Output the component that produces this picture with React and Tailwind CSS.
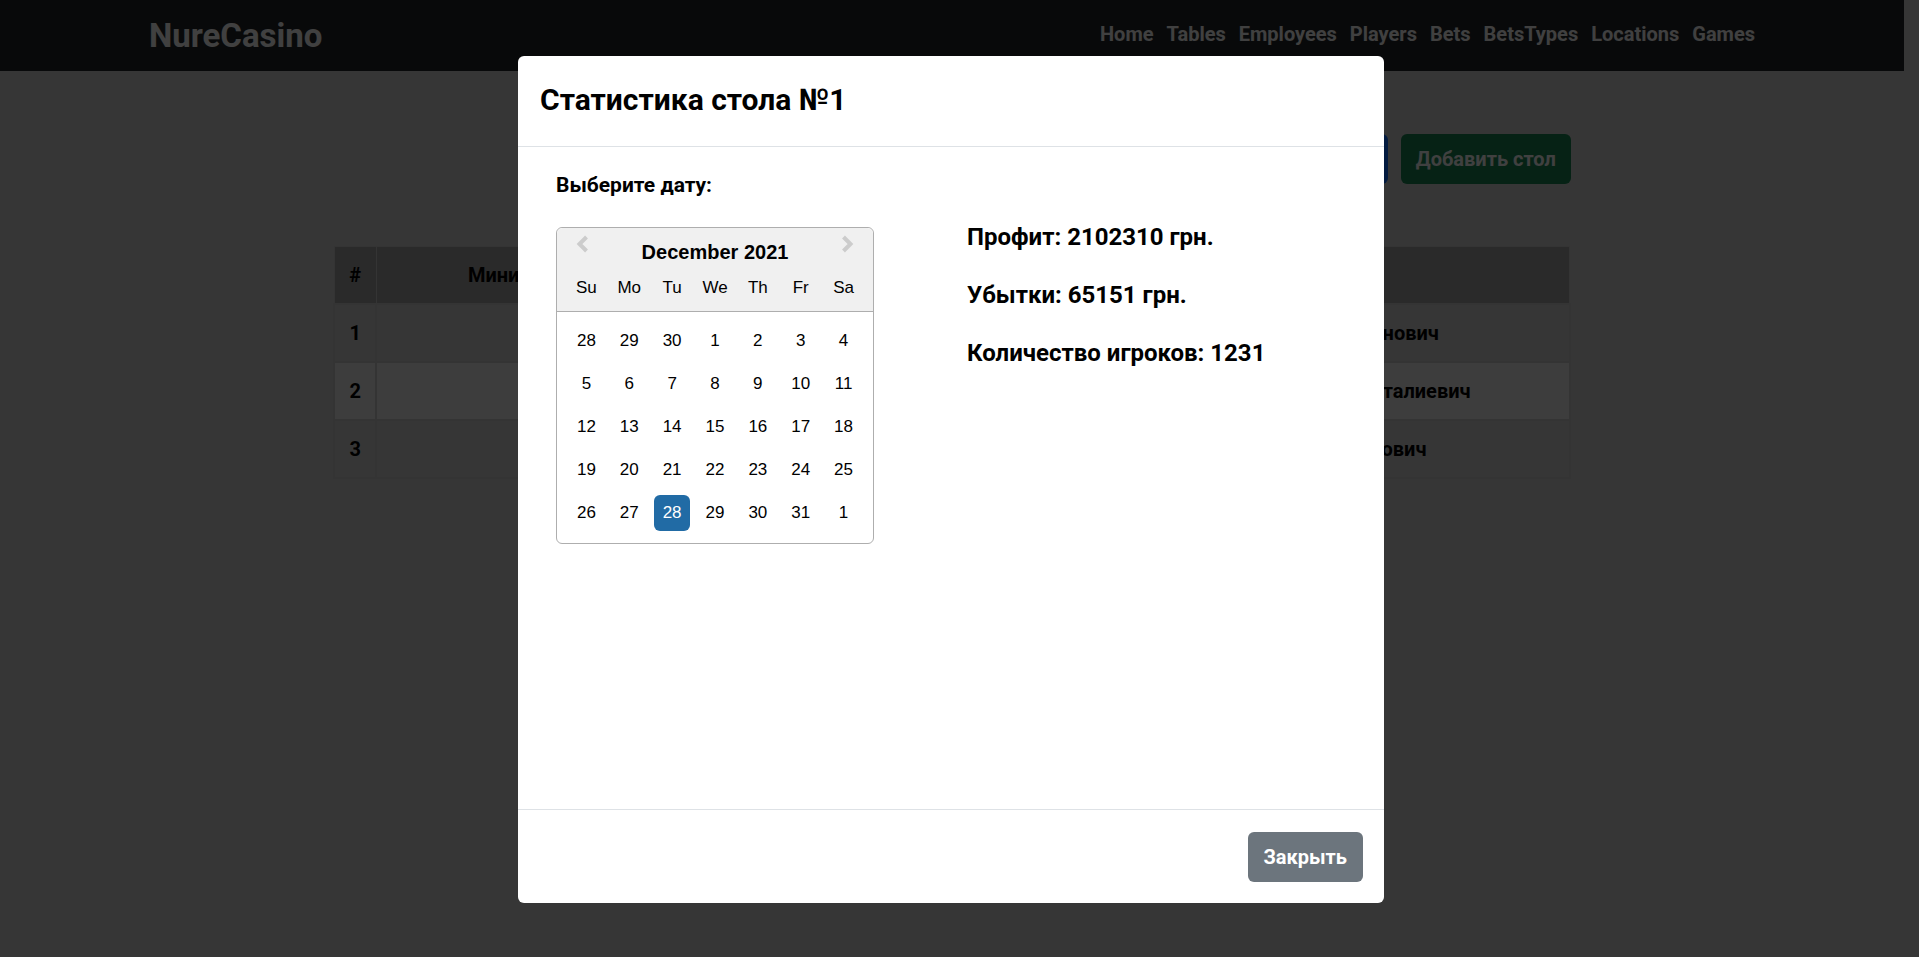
const links = ["Home", "Tables", "Employees", "Players", "Bets", "BetsTypes", "Locations", "Games"];

const rows = [
  { id: 1, min: 100, max: 1000, croupier: "Попов Лев Иванович" },
  { id: 2, min: 200, max: 5000, croupier: "Петров Андрей Виталиевич" },
  { id: 3, min: 500, max: 9000, croupier: "Ли Петр Петрович" },
];

const weekdays = ["Su", "Mo", "Tu", "We", "Th", "Fr", "Sa"];

const weeks = [
  [28, 29, 30, 1, 2, 3, 4],
  [5, 6, 7, 8, 9, 10, 11],
  [12, 13, 14, 15, 16, 17, 18],
  [19, 20, 21, 22, 23, 24, 25],
  [26, 27, 28, 29, 30, 31, 1],
];

function Navbar() {
  return (
    <header className="mr-[15px] flex h-[71px] items-center justify-between bg-[#212529] px-[149px] text-white">
      <a href="#home" className="text-[33px] leading-10">NureCasino</a>
      <nav className="flex gap-[13px] pb-1 text-xl">
        {links.map((name) => (
          <a key={name} href={"#" + name.toLowerCase()}>{name}</a>
        ))}
      </nav>
    </header>
  );
}

function TablesPage() {
  return (
    <main className="mr-[15px] flex flex-col items-center">
      <div className="w-[65%]">
        <div className="flex justify-end gap-[13px] pt-[63px] pb-[62px] text-xl text-white">
          <button className="h-[50px] rounded-md bg-[#0d6efd] px-[15px]">Обновить</button>
          <button className="h-[50px] rounded-md bg-[#198754] px-[15px]">Добавить стол</button>
        </div>
        <table className="w-full table-fixed border-collapse text-center text-xl">
          <thead>
            <tr className="h-[57px] bg-[#a6a6a6]">
              <th className="w-[42px] border border-[#d0d0d0]">#</th>
              <th className="w-[386px] border border-[#d0d0d0]">Минимальная ставка</th>
              <th className="w-[348px] border border-[#d0d0d0]">Максимальная ставка</th>
              <th className="border border-[#d0d0d0]">Крупье</th>
            </tr>
          </thead>
          <tbody>
            {rows.map((row) => (
              <tr key={row.id} className="h-[58px] even:bg-[#f2f2f2]">
                <td className="border-2 border-[#d0d0d0]">{row.id}</td>
                <td className="border-2 border-[#d0d0d0]">{row.min}</td>
                <td className="border-2 border-[#d0d0d0]">{row.max}</td>
                <td className="border-2 border-[#d0d0d0]">{row.croupier}</td>
              </tr>
            ))}
          </tbody>
        </table>
      </div>
    </main>
  );
}

function Arrow({ label, d }) {
  return (
    <button aria-label={label} className="flex h-8 w-8 items-center justify-center">
      <svg width="12" height="18" viewBox="0 0 12 18" fill="none" stroke="#ccc" strokeWidth="4">
        <path d={d} />
      </svg>
    </button>
  );
}

function Calendar() {
  return (
    <div className="w-[318px] rounded-md border border-[#aeaeae] bg-white font-['Liberation_Sans',Arial,sans-serif] text-[17px] leading-6 font-normal">
      <div className="h-[84px] rounded-t-md border-b border-[#aeaeae] bg-[#f0f0f0]">
        <div className="flex h-12 justify-between px-[9px]">
          <Arrow label="Previous Month" d="M10.5 2 L3.5 9 L10.5 16" />
          <div className="self-center text-xl font-bold">December 2021</div>
          <Arrow label="Next Month" d="M1.5 2 L8.5 9 L1.5 16" />
        </div>
        <div className="grid grid-cols-7 px-2 text-center">
          {weekdays.map((day) => (
            <div key={day}>{day}</div>
          ))}
        </div>
      </div>
      <div className="px-2 pt-[7px] pb-[9px]">
        {weeks.map((week, w) => (
          <div key={w} className="grid h-[43px] grid-cols-7 place-items-center">
            {week.map((day, d) => (
              <button
                key={d}
                className={
                  w === 4 && day === 28
                    ? "h-9 w-9 rounded-md bg-[#216ba5] text-white"
                    : "h-9 w-9 rounded-md text-black"
                }
              >
                {day}
              </button>
            ))}
          </div>
        ))}
      </div>
    </div>
  );
}

function StatsDialog() {
  return (
    <div className="fixed inset-0 flex items-start justify-center bg-black/75 pt-14 pr-[17px]">
      <div
        role="dialog"
        aria-modal="true"
        aria-labelledby="stats-title"
        className="w-full max-w-[866px] rounded-md bg-white"
      >
        <div className="border-b border-[#dee2e6] px-[22px] pt-6 pb-[26px]">
          <h2 id="stats-title" className="text-[30px] leading-10">Статистика стола №1</h2>
        </div>
        <div className="flex min-h-[662px] px-[38px] pt-6">
          <div className="w-[411px]">
            <p className="text-[21px] leading-7">Выберите дату:</p>
            <div className="pt-7">
              <Calendar />
            </div>
          </div>
          <div className="flex flex-col gap-[26px] pt-[50px] text-2xl">
            <p>Профит: 2102310 грн.</p>
            <p>Убытки: 65151 грн.</p>
            <p>Количество игроков: 1231</p>
          </div>
        </div>
        <div className="flex justify-end border-t border-[#dee2e6] px-[21px] pt-[22px] pb-[21px]">
          <button className="h-[50px] rounded-md bg-[#6c757d] px-4 text-xl text-white">Закрыть</button>
        </div>
      </div>
    </div>
  );
}

export default function App() {
  return (
    <div className="min-h-screen bg-[#d6d6d6] font-[Roboto,'Liberation_Sans',sans-serif] font-bold text-black">
      <Navbar />
      <TablesPage />
      <StatsDialog />
    </div>
  );
}
